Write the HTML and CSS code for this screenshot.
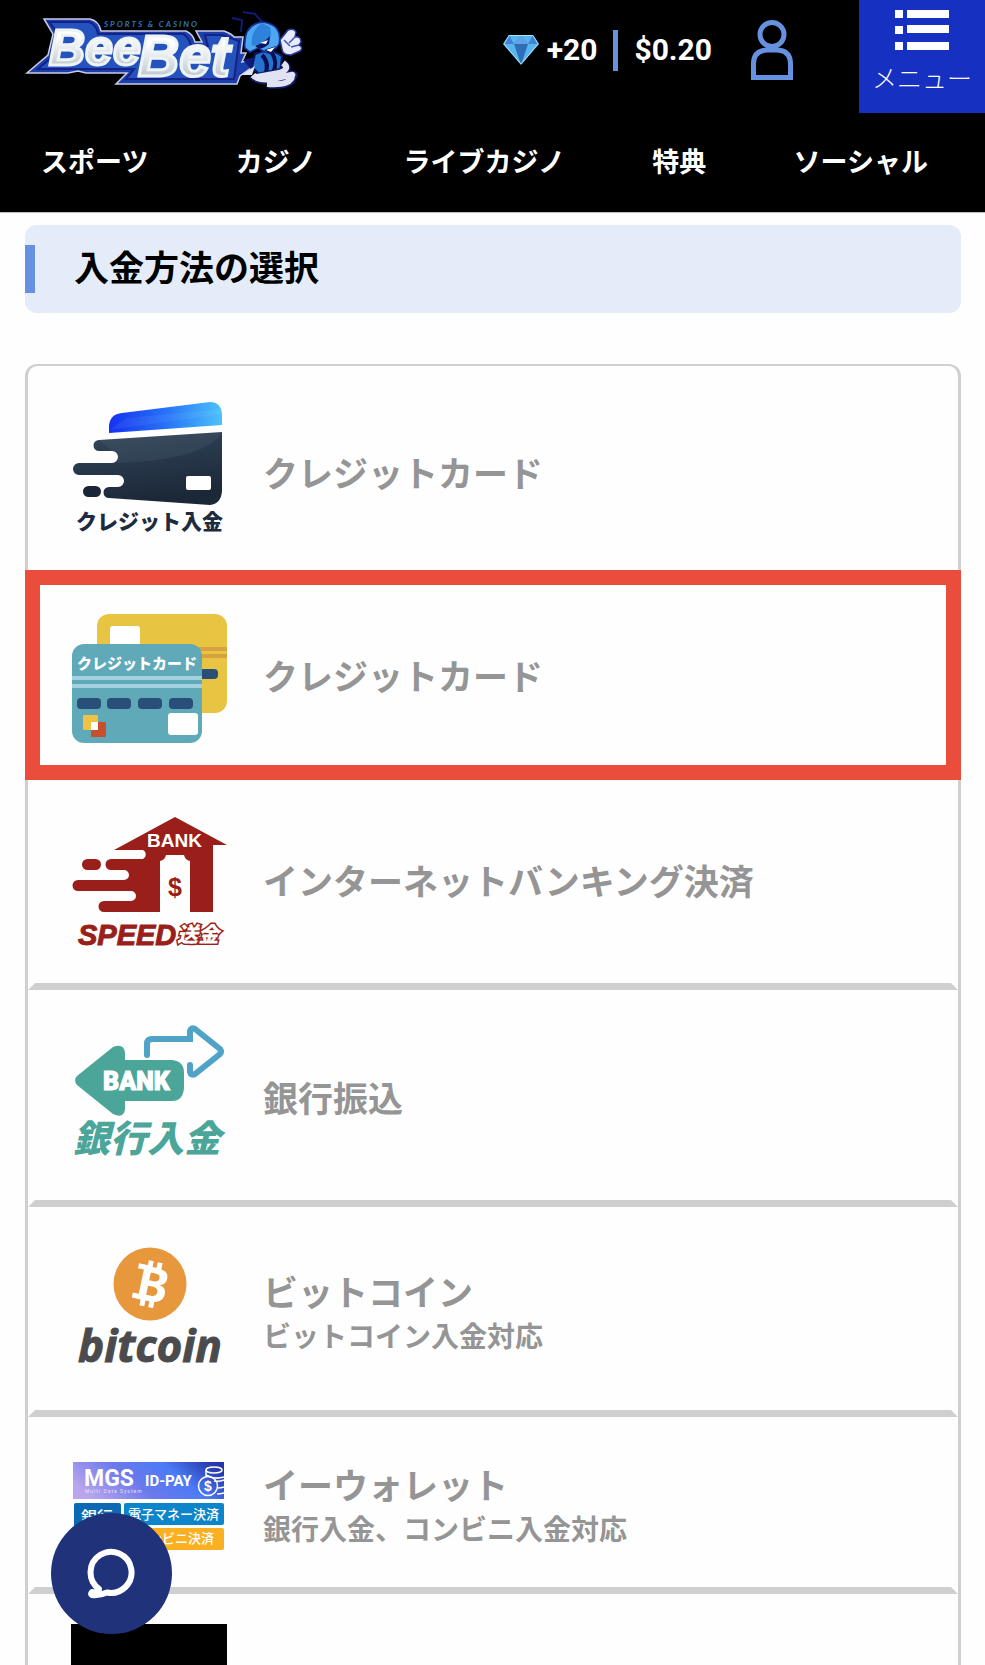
FILE: index.html
```html
<!DOCTYPE html>
<html lang="ja">
<head>
<meta charset="utf-8">
<meta name="viewport" content="width=device-width, initial-scale=1">
<title>入金方法の選択</title>
<link rel="stylesheet" href="styles.css">
</head>
<body>
<header class="header">
  <div class="topbar">
    <a class="brand" href="#" aria-label="BeeBet">
      <svg class="brand-logo" viewBox="0 0 330 110">
        <defs>
          <linearGradient id="steel" x1="0" y1="0" x2="0" y2="1"><stop offset=".3" stop-color="#fff"/><stop offset="1" stop-color="#a9b7bd"/></linearGradient>
        </defs>
        <path d="M44 19H90Q99 21 101 31H186Q193 34 195 42H202L196 31H224Q232 34 234 37H243L241 53H246L242 62L266 57L240 76L237 84H116L127 73H86L78 71L68 73H27L48 55L53 34Z" fill="#1c3fa8" stroke="#c9cbe8" stroke-width="1.5"/>
        <path d="M49 22H89Q96 24 98 34H183Q189 37 191 46H208L205 35H222L239 41L234 79H126L134 69H38L53 56L58 33Z" fill="#2453bd" stroke="#14228a" stroke-width="2"/>
        <text class="brand-word" x="49" y="65" font-size="50">Bee</text>
        <text class="brand-word" x="138" y="76" font-size="57">Bet</text>
        <text class="brand-tag" x="104" y="27" font-size="8">SPORTS &amp; CASINO</text>
        <path d="M232 18l10 2-1 12M243 12l12 2 8 9" fill="none" stroke="#101b78" stroke-width="2"/>
        <path d="M243 60l12-3 10 10-12 5z" fill="#101c7c"/>
        <path d="M255 54q15-7 27 2l-2 17-18 4-10-10z" fill="#2473cf" stroke="#0b1765" stroke-width="2"/>
        <path d="M262 55q8 8 3 20M272 53q6 9 1 20" fill="none" stroke="#081052" stroke-width="4"/>
        <path d="M245 48Q243 24 263 22Q283 25 279 44Q275 51 267 53L258 48L250 52Z" fill="#4ca7f2" stroke="#15329b" stroke-width="1.5"/>
        <path d="M262 23Q250 31 252 46L259 44Q274 43 270 27Z" fill="#2d83db"/>
        <path d="M255 46q10-4 15-10l-1 8q-4 4-10 5zM264 50l12-4-5 9z" fill="#0b1765"/>
        <path d="M260 43l8-3-2 4zM266 50l9-3-4 5z" fill="#fff"/>
        <path d="M280 40l8-10q6-2 8 2l-1 5q6-1 6 5l-2 3q5 3 1 6l-9 4q-9 0-9-6z" fill="#e8ebff" stroke="#2b3b9b" stroke-width="1.5"/>
        <path d="M284 40l6 6M295 37l-6 6M299 45l-8 2" fill="none" stroke="#4257b5" stroke-width="1.5"/>
        <g fill="none" stroke="#141b67" stroke-width="9"><path d="M283 64q8 5-4 9l-24 5M253 75q5 8 25 3t14-2q0 10-24 8"/></g>
        <g fill="none" stroke="#e1e3f2" stroke-width="6"><path d="M283 63q8 6-4 10l-22 4M253 75q6 7 24 3t15-3q0 11-25 9"/></g>
        <path d="M241 75l14-9-3 9z" fill="#e2e4f4"/>
      </svg>
    </a>
    <div class="status">
      <svg class="gem" viewBox="0 0 36 30">
        <path d="M6 0H30L36 9L18 30L0 9Z" fill="#58b5ee"/>
        <path d="M0 9H36L30 0 25 9 18 0 11 9 6 0Z" fill="#3f84d6"/>
        <path d="M11 9H25L18 30Z" fill="#2e6fb8"/>
        <path d="M18 0L11 9H25Z" fill="#5fa3e8"/>
        <path d="M6 .5H30L35 9L18 29L1 9Z" fill="none" stroke="#a6e2fa"/>
      </svg>
      <span class="points">+20</span>
      <span class="divider"></span>
      <span class="balance">$0.20</span>
      <a class="account" href="#" aria-label="アカウント">
        <svg class="account-icon" viewBox="0 0 42 60"><g fill="none" stroke="#6691e0" stroke-width="5"><circle cx="21" cy="14.500" r="12"/><path d="M2.500 57.500V44Q2.500 30 17 30H25Q39.500 30 39.500 44V57.500Z"/></g></svg>
      </a>
    </div>
    <button class="menu" type="button">
      <svg class="menu-icon" viewBox="0 0 54 40" fill="#fff"><path d="M0 0h8v8H0zM12 0h42v8H12zM0 16h8v8H0zM12 15h42v8H12zM0 32h8v8H0zM12 32h42v8H12z"/></svg>
      <span>メニュー</span>
    </button>
  </div>
  <nav class="nav">
    <a href="#">スポーツ</a><a href="#">カジノ</a><a href="#">ライブカジノ</a><a href="#">特典</a><a href="#">ソーシャル</a>
  </nav>
</header>

<main class="main">
  <h1 class="title">入金方法の選択</h1>
  <ul class="methods">
    <li class="method method-first">
      <a class="method-link" href="#">
        <svg class="logo" viewBox="71 402 156 140">
          <defs>
            <linearGradient id="sky"><stop offset="0" stop-color="#1432f0"/><stop offset=".5" stop-color="#2672f8"/><stop offset="1" stop-color="#4cc2fa"/></linearGradient>
            <linearGradient id="navy" x1="0" y1="0" x2=".3" y2="1"><stop offset="0" stop-color="#34475d"/><stop offset="1" stop-color="#1b2838"/></linearGradient>
          </defs>
          <path d="M109 433V426Q110 414 122 413L210 402Q221 402 222 414V425Z" fill="url(#sky)"/>
          <path d="M127 418L222 409V414L109 430Z" fill="#fff" opacity=".06"/>
          <path d="M222 432V491Q221 504 210 505L109 498A5 5 0 0 1 109 487H118A5.500 5.500 0 0 0 118 475H79A5.500 5.500 0 0 1 79 463H112A5.500 5.500 0 0 0 112 451H99A5.500 5.500 0 0 1 99 440Z" fill="url(#navy)"/>
          <path d="M222 432Q205 460 118 463L112 451L99 440Z" fill="#fff" opacity=".05"/>
          <rect x="83" y="486" width="18" height="11" rx="5.500" fill="#1a2635"/>
          <rect x="186" y="476" width="25" height="14" rx="2" fill="#fff"/>
          <text class="jp-black" x="76" y="529" font-size="21" fill="#1d2b3f">クレジット入金</text>
        </svg>
        <span class="method-name">クレジットカード</span>
      </a>
    </li>
    <li class="method method-selected">
      <a class="method-link" href="#">
        <svg class="logo" viewBox="71 605 156 140">
          <rect x="97" y="614" width="130" height="99" rx="12" fill="#e8c443"/>
          <rect x="110" y="626" width="30" height="30" rx="3" fill="#fff"/>
          <path d="M180 647h47v4h-47zM180 654h47v4h-47z" fill="#d9a03f"/>
          <rect x="190" y="669" width="28" height="10" rx="4" fill="#294f78"/>
          <rect x="72" y="644" width="130" height="99" rx="12" fill="#5fa9b8"/>
          <path d="M72 676h130v4H72zM72 684h130v4H72z" fill="#a3d2de"/>
          <g fill="#294f78"><rect x="77" y="698" width="24" height="11" rx="4"/><rect x="107" y="698" width="24" height="11" rx="4"/><rect x="138" y="698" width="24" height="11" rx="4"/><rect x="169" y="698" width="24" height="11" rx="4"/></g>
          <rect x="91" y="722" width="15" height="15" rx="1" fill="#c84f2c"/><rect x="83" y="715" width="15" height="15" rx="1" fill="#f0c143"/><rect x="91" y="722" width="7" height="8" fill="#fff"/>
          <rect x="168" y="713" width="30" height="22" rx="3" fill="#fff"/>
          <text class="jp-black" x="77" y="669" font-size="15" fill="#fff">クレジットカード</text>
        </svg>
        <span class="method-name">クレジットカード</span>
      </a>
    </li>
    <li class="method method-speed">
      <a class="method-link" href="#">
        <svg class="logo" viewBox="71 809 156 140">
          <path d="M114 849L175 816L227 844H213V911H190V860Q185 859 184 854H166Q165 859 160 860V911H104A5 5 0 0 1 104 900H131A5 5 0 0 0 131 890H78A5 5 0 0 1 78 879H124A5 5 0 0 0 124 869H111A5 5 0 0 1 111 858H143A5 5 0 0 0 143 849Z" fill="#9a1f1a"/>
          <rect x="82" y="858" width="19" height="11" rx="5.500" fill="#9a1f1a"/>
          <text class="latin-bold" x="147" y="846" font-size="19" fill="#fff">BANK</text>
          <text class="latin-bold" x="168" y="895" font-size="25" fill="#9a1f1a">$</text>
          <text class="latin-bold speed" x="78" y="944" font-size="29">SPEED</text>
          <text class="jp-black transfer" x="177" y="941" font-size="21">送金</text>
        </svg>
        <span class="method-name">インターネットバンキング決済</span>
      </a>
    </li>
    <li class="method method-tall">
      <a class="method-link" href="#">
        <svg class="logo" viewBox="71 1026 156 140">
          <path d="M147 1054V1043Q147 1038 152 1038H190V1030Q191 1026 195 1028L220 1048Q222 1051 220 1053L195 1073Q191 1075 190 1071V1064" fill="none" stroke="#4fa3c7" stroke-width="6" stroke-linecap="round"/>
          <path d="M77 1075L113 1046Q124 1042 125 1052V1059H172Q184 1060 184 1072V1087Q183 1100 172 1100H125V1108Q124 1118 113 1113L77 1084Q73 1079 77 1075Z" fill="#4ba598"/>
          <text class="bank-word" x="103" y="1089" font-size="25">BANK</text>
          <text class="jp-black bank-jp" x="73" y="1151" font-size="37">銀行入金</text>
        </svg>
        <span class="method-name">銀行振込</span>
      </a>
    </li>
    <li class="method">
      <a class="method-link" href="#">
        <svg class="logo" viewBox="71 1238 156 140">
          <circle cx="150" cy="1283" r="36.500" fill="#e7973c"/>
          <g transform="rotate(12 150 1283)" fill="#fff">
            <path d="M144 1260h5v9h-5zM153 1260h5v9h-5zM144 1297h5v9h-5zM153 1297h5v9h-5zM135 1265h12v5h-12zM135 1295h12v5h-12z"/>
            <text class="coin-b" x="137" y="1300" font-size="48">B</text>
          </g>
          <text class="bitcoin-word" x="78" y="1361" font-size="44">bitcoin</text>
        </svg>
        <span class="method-text"><span class="method-name">ビットコイン</span><span class="method-note">ビットコイン入金対応</span></span>
      </a>
    </li>
    <li class="method method-short">
      <a class="method-link" href="#">
        <svg class="logo" viewBox="71 1432 156 140">
          <defs><linearGradient id="mgs" x1="0" y1=".6" x2="1" y2=".3"><stop offset="0" stop-color="#baa6ec"/><stop offset=".4" stop-color="#6a79ec"/><stop offset=".7" stop-color="#4b7bf7"/><stop offset="1" stop-color="#2638a8"/></linearGradient></defs>
          <rect x="73" y="1462" width="151" height="37" fill="url(#mgs)"/>
          <text class="mgs" x="84" y="1486" font-size="23">MGS</text>
          <text class="mgs-small" x="85" y="1493" font-size="5">Multi Data System</text>
          <text class="mgs" x="145" y="1486" font-size="15">ID-PAY</text>
          <g fill="none" stroke="#fff" stroke-width="1.500"><ellipse cx="214" cy="1470" rx="8" ry="3"/><path d="M206 1470v6M206 1475q8 5 18 2M214 1481q5 1 10-1M218 1488q3 0 6-1M217 1494q3 0 7-1"/><circle cx="208" cy="1486" r="9.500"/></g>
          <text class="latin-bold" x="204" y="1491" font-size="14" fill="#fff">$</text>
          <rect x="74" y="1503" width="47" height="47" rx="2" fill="#0c69b3"/>
          <rect x="124" y="1503" width="100" height="22" rx="2" fill="#0d85cb"/>
          <rect x="124" y="1528" width="100" height="22" rx="2" fill="#fbb022"/>
          <text class="jp-tile" x="81" y="1523" font-size="16">銀行</text>
          <text class="jp-tile" x="128" y="1519" font-size="13">電子マネー決済</text>
          <text class="jp-tile" x="136" y="1543" font-size="13">コンビニ決済</text>
        </svg>
        <span class="method-text"><span class="method-name">イーウォレット</span><span class="method-note">銀行入金、コンビニ入金対応</span></span>
      </a>
    </li>
    <li class="method method-last">
      <a class="method-link" href="#" aria-label="その他">
        <svg class="logo" viewBox="0 0 156 140"><rect width="156" height="140"/></svg>
      </a>
    </li>
  </ul>
</main>

<button class="chat" type="button" aria-label="チャット">
  <svg class="chat-icon" viewBox="0 0 50 52"><path d="M12 41A20.500 20.500 0 1 1 20 44.500Q12 48 5 47Q3 46 5 44Q12 45 12 41Z" fill="none" stroke="#fff" stroke-width="6" stroke-linejoin="round"/></svg>
</button>
</body>
</html>
```
FILE: styles.css
```css
* {
  box-sizing: border-box;
}

body {
  display: flex;
  flex-direction: column;
  height: 100vh;
  margin: 0;
  overflow: hidden;
  background: #fefefe;
  font-family: "Noto Sans CJK JP", sans-serif;
}

a {
  color: inherit;
  text-decoration: none;
}

button {
  padding: 0;
  border: 0;
  color: #fff;
  font-family: inherit;
}

svg {
  display: block;
  flex-shrink: 0;
}

.header {
  flex-shrink: 0;
  border-bottom: 1px solid #bbb;
  background: #000;
  color: #fff;
}

.topbar {
  display: flex;
  height: 113px;
}

.brand {
  margin-right: auto;
}

.brand-logo {
  width: 330px;
  height: 110px;
}

.brand-word {
  fill: url(#steel);
  stroke: #eef3f6;
  stroke-width: 3px;
  font-family: "Liberation Sans", Arial, sans-serif;
  font-style: italic;
  font-weight: 700;
}

.brand-tag {
  fill: #2d78b8;
  font-family: Lato, sans-serif;
  font-style: italic;
  font-weight: 700;
  letter-spacing: 2px;
}

.status {
  display: flex;
  align-items: center;
  height: 100px;
  margin-right: 66px;
  font: 700 30px/40px Roboto, sans-serif;
}

.gem {
  width: 36px;
  height: 30px;
  margin-right: 8px;
}

.divider {
  width: 5px;
  height: 41px;
  margin: 0 16px;
  background: #6691e0;
}

.account {
  margin-left: 39px;
}

.account-icon {
  width: 42px;
  height: 60px;
}

.menu {
  display: flex;
  flex-direction: column;
  align-items: center;
  width: 126px;
  padding-top: 10px;
  background: #1630c1;
  font-size: 25px;
  font-weight: 300;
  line-height: 36px;
}

.menu-icon {
  width: 54px;
  height: 40px;
  margin-bottom: 9px;
}

.nav {
  display: flex;
  align-items: center;
  justify-content: space-between;
  height: 99px;
  padding: 0 57px 4px 41px;
  font-size: 27px;
  font-weight: 700;
  line-height: 40px;
}

.main {
  display: flow-root;
  padding: 0 24px 0 25px;
}

.title {
  display: flex;
  align-items: center;
  height: 88px;
  margin: 12px 0 51px;
  padding-bottom: 6px;
  border-radius: 12px;
  background: linear-gradient(#6691e0, #6691e0) 0 20px / 10px 48px no-repeat #e3ecf8;
  padding-left: 49px;
  font-size: 35px;
  font-weight: 700;
  line-height: 48px;
}

.methods {
  margin: 0;
  padding: 0;
  border: 3px solid #cfcfcf;
  border-top-width: 2px;
  border-radius: 12px;
  list-style: none;
  color: #959595;
  font-weight: 700;
}

.method {
  display: flex;
  height: 210px;
  padding-left: 36px;
  border: 7px solid transparent;
  border-top: 0;
  border-bottom-color: #cfcfcf;
}

.method-first {
  height: 204px;
  padding-top: 8px;
  border-bottom: 0;
}

.method-selected {
  margin: 0 -3px;
  padding-left: 31px;
  border: 15px solid #eb4d3d;
}

.method-speed {
  padding-bottom: 4px;
}

.method-tall {
  height: 217px;
  padding-top: 3px;
}

.method-short {
  height: 177px;
}

.method-last {
  padding-top: 30px;
  border-bottom: 0;
}

.method-link {
  display: flex;
  flex: 1;
  align-items: center;
  gap: 36px;
}

.method-last .method-link {
  align-items: flex-start;
}

.logo {
  width: 156px;
  height: 140px;
  overflow: visible;
}

.method-text {
  display: flex;
  flex-direction: column;
  padding-top: 4px;
}

.method-name {
  font-size: 35px;
  line-height: 48px;
}

.method-note {
  font-size: 28px;
  line-height: 40px;
}

.jp-black {
  font-weight: 900;
}

.jp-tile {
  fill: #fff;
  font-weight: 500;
}

.latin-bold {
  font-family: "Liberation Sans", Arial, sans-serif;
  font-weight: 700;
}

.speed {
  fill: #9a1f1a;
  stroke: #9a1f1a;
  font-style: italic;
}

.transfer {
  fill: #fff;
  stroke: #9a1f1a;
  stroke-width: 3px;
  paint-order: stroke;
  font-style: italic;
}

.bank-word {
  fill: #fff;
  stroke: #fff;
  font-family: Roboto, sans-serif;
  font-weight: 900;
}

.bank-jp {
  fill: #4ba598;
  font-style: italic;
}

.coin-b {
  font-family: "Noto Sans", sans-serif;
  font-weight: 700;
}

.bitcoin-word {
  fill: #4b4b4d;
  stroke: #4b4b4d;
  font-family: "Open Sans", "Noto Sans", sans-serif;
  font-style: italic;
  font-weight: 700;
}

.mgs {
  fill: #fff;
  font-family: Roboto, sans-serif;
  font-weight: 700;
}

.mgs-small {
  fill: #e4e0fb;
  font-family: Roboto, sans-serif;
  font-weight: 400;
  letter-spacing: 1px;
}

.chat {
  position: fixed;
  bottom: 31px;
  left: 51px;
  display: flex;
  align-items: center;
  justify-content: center;
  width: 121px;
  height: 121px;
  border-radius: 50%;
  background: #1f327a;
}

.chat-icon {
  width: 50px;
  height: 52px;
}
```
